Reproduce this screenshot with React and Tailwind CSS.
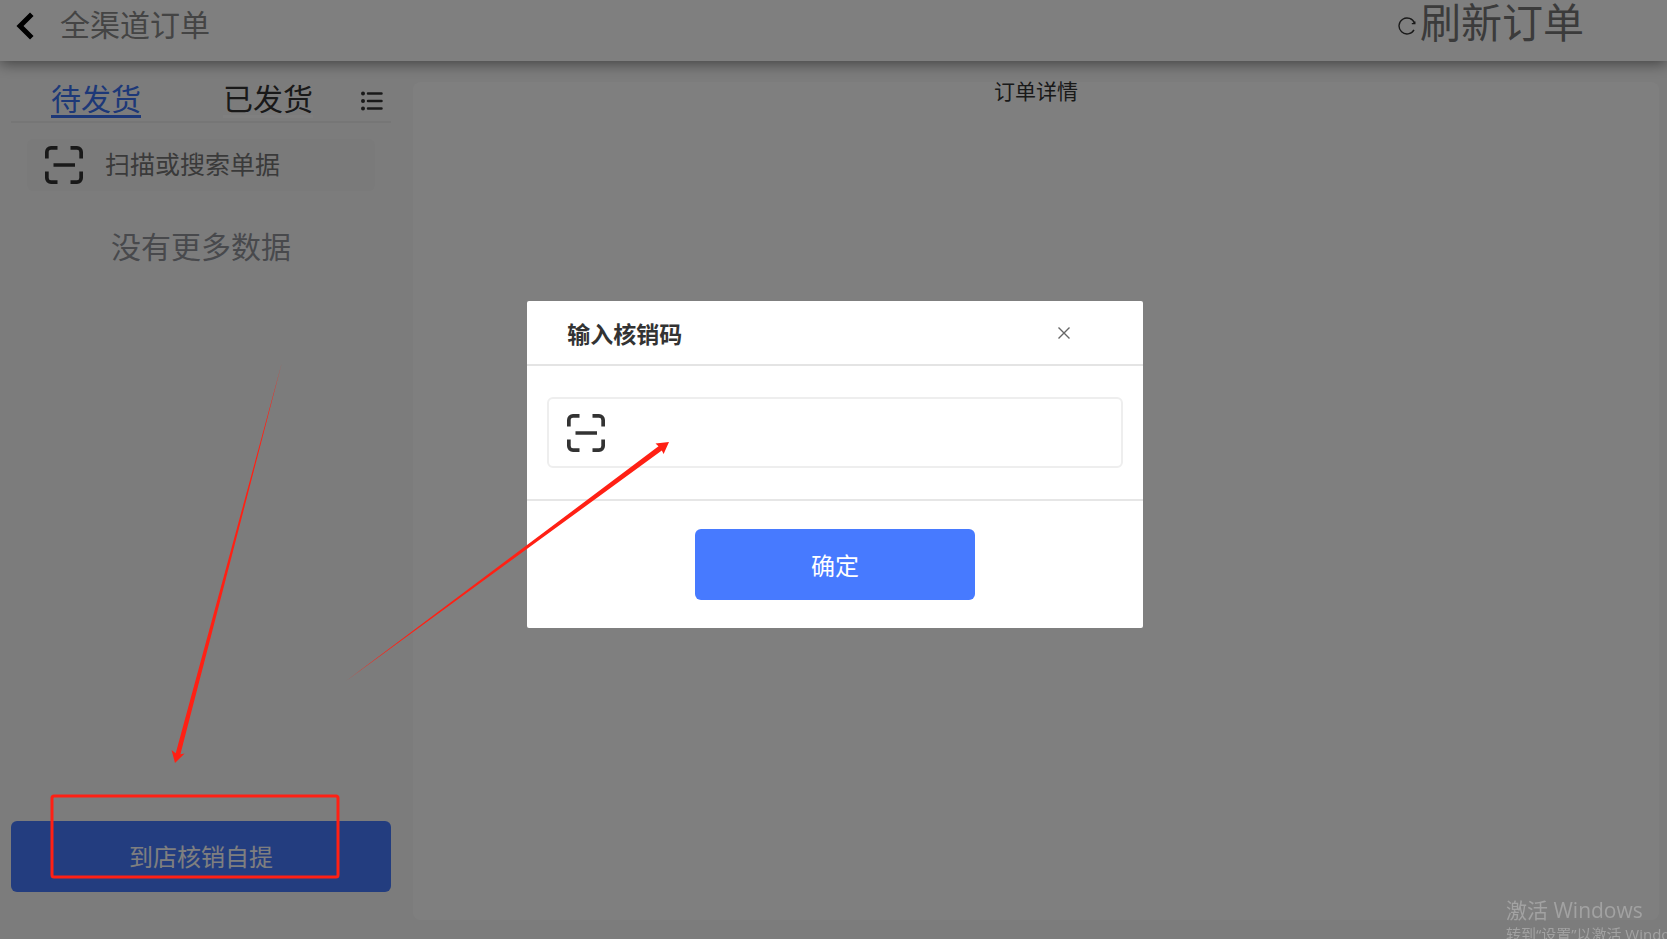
import React, { useState } from 'react';

const TABS = [
  { id: 'pending', label: '待发货' },
  { id: 'shipped', label: '已发货' },
];

const ScanIcon = ({ className }) => (
  <svg className={className} viewBox="0 0 38 38" fill="none" stroke="currentColor" strokeWidth="3.7" aria-hidden="true">
    <path d="M1.85 12.5V6a4.15 4.15 0 0 1 4.15-4.15h6.5M25.5 1.85H32A4.15 4.15 0 0 1 36.15 6v6.5M36.15 25.5V32A4.15 4.15 0 0 1 32 36.15h-6.5M12.5 36.15H6A4.15 4.15 0 0 1 1.85 32v-6.5M8.5 19h21.5" />
  </svg>
);

const ListIcon = () => (
  <svg className="w-[22px] h-5" viewBox="0 0 22 20" aria-hidden="true">
    <g fill="currentColor">
      <circle cx="2" cy="2.5" r="2" />
      <circle cx="2" cy="10" r="2" />
      <circle cx="2" cy="17.5" r="2" />
    </g>
    <path d="M7 2.5h13.5M7 10h13.5M7 17.5h13.5" stroke="currentColor" strokeWidth="2.5" strokeLinecap="round" />
  </svg>
);

const Header = () => (
  <header className="relative z-10 flex items-center justify-between h-[61px] pl-4 pr-[83px] pb-2.5 bg-white shadow-[0_2px_14px_rgba(0,0,0,0.5)]">
    <div className="flex items-center gap-[26px]">
      <button type="button" aria-label="返回" className="text-black">
        <svg className="w-[18px] h-7" viewBox="0 0 18 28" fill="none" stroke="currentColor" strokeWidth="5" aria-hidden="true">
          <path d="M15.8 2.2L4 14l11.8 11.8" />
        </svg>
      </button>
      <h1 className="pb-1.5 text-[30px] leading-9 text-[#888]">全渠道订单</h1>
    </div>
    <button type="button" className="flex items-center gap-1 text-[41px] leading-9 text-[#777]">
      <svg className="w-[18px] h-[18px] text-[#333]" viewBox="0 0 18 18" fill="none" stroke="currentColor" strokeWidth="1.4" aria-hidden="true">
        <path d="M16.6 6.4A8 8 0 1 0 16 12.9M13.8 6.6h3V4.6" />
      </svg>
      <span className="pb-3">刷新订单</span>
    </button>
  </header>
);

const Sidebar = () => {
  const [active, setActive] = useState('pending');

  return (
    <aside className="flex flex-col shrink-0 w-[380px] pb-7">
      <div className="flex items-end h-[41px] pl-10 pr-2 border-b-2 border-[#ececec]">
        <div className="flex flex-1 justify-between">
          {TABS.map((tab) => (
            <button
              key={tab.id}
              type="button"
              onClick={() => setActive(tab.id)}
              className={`mb-[3px] border-b-3 text-[30px] leading-9 ${
                active === tab.id ? 'border-[#3a71f0] text-[#3a71f0]' : 'border-white text-[#333]'
              }`}
            >
              {tab.label}
            </button>
          ))}
        </div>
        <button type="button" aria-label="筛选" className="mb-2.5 ml-12 text-[#333]">
          <ListIcon />
        </button>
      </div>

      <label className="flex items-center gap-[22px] h-[52px] mx-4 mt-4 px-[18px] rounded-md bg-[#f4f4f4] text-[#333]">
        <ScanIcon className="w-[38px] h-[38px] shrink-0" />
        <input
          type="text"
          aria-label="搜索单据"
          placeholder="扫描或搜索单据"
          className="w-full min-w-0 pb-1 bg-transparent text-[25px] leading-8 outline-none placeholder:text-[#757575]"
        />
      </label>

      <p className="mt-[34px] text-center text-[30px] leading-10 text-[#909399]">没有更多数据</p>

      <button type="button" className="mt-auto h-[71px] pb-0.5 rounded-md bg-[#477aff] text-2xl text-white">
        到店核销自提
      </button>
    </aside>
  );
};

const VerifyDialog = () => (
  <div className="fixed inset-0 z-20 flex items-center justify-center pl-[3px] pb-2.5 bg-black/50">
    <section role="dialog" aria-modal="true" aria-labelledby="verify-title" className="w-[37%] rounded-xs bg-white">
      <div className="flex items-center justify-between h-[65px] pl-10 pr-[73px] border-b-2 border-[#e4e4e4]">
        <h2 id="verify-title" className="text-[23px] leading-8 font-bold text-[#333]">输入核销码</h2>
        <button type="button" aria-label="关闭" className="text-[#666]">
          <svg className="w-3 h-3" viewBox="0 0 12 12" stroke="currentColor" strokeWidth="1.4" aria-hidden="true">
            <path d="M0.5 0.5l11 11M11.5 0.5l-11 11" />
          </svg>
        </button>
      </div>
      <div className="px-5 py-[31px] border-b-2 border-[#e6e6e6]">
        <label className="flex items-center gap-5 h-[71px] px-[18px] border-2 border-[#eee] rounded-md text-[#333]">
          <ScanIcon className="w-[38px] h-[38px] shrink-0" />
          <input type="text" aria-label="核销码" className="w-full min-w-0 text-2xl outline-none" />
        </label>
      </div>
      <div className="flex justify-center py-7">
        <button type="button" className="w-[280px] h-[71px] rounded-md bg-[#477aff] text-2xl text-white">确定</button>
      </div>
    </section>
  </div>
);

const Annotations = () => (
  <svg className="fixed top-0 left-0 z-30 w-[700px] h-[900px] pointer-events-none" viewBox="0 0 700 900" aria-hidden="true">
    <g fill="#ff2014">
      <path d="M281.8 363L175.7 753.2L171.5 750L175 763L184.7 753.6L180.4 754.2Z" />
      <path d="M346 681L658.5 446.3L655.5 443.6L669 442L663.6 454L661.8 450.6Z" />
    </g>
    <rect x="52" y="796" width="286" height="81" rx="2" fill="none" stroke="#ff2014" strokeWidth="3" />
  </svg>
);

const App = () => (
  <div className="flex flex-col min-h-screen bg-[#f9f9f9] font-['Noto_Sans_CJK_SC',sans-serif]">
    <Header />
    <div className="flex flex-1 gap-[22px] pl-[11px] pr-2 pt-[21px] pb-[19px]">
      <Sidebar />
      <main className="flex-1 rounded-lg bg-white">
        <h2 className="-mt-1.5 text-center text-[21px] leading-7 text-[#333]">订单详情</h2>
      </main>
    </div>
    <VerifyDialog />
    <Annotations />
    <div className="fixed bottom-0 right-0 z-30 w-[161px] h-[43px] overflow-hidden whitespace-nowrap text-[#a2a2a2] font-['Open_Sans','Noto_Sans_CJK_SC',sans-serif]">
      <p className="text-[21px] leading-7">激活 Windows</p>
      <p className="text-[15px] leading-5">转到“设置”以激活 Windows</p>
    </div>
  </div>
);

export default App;
